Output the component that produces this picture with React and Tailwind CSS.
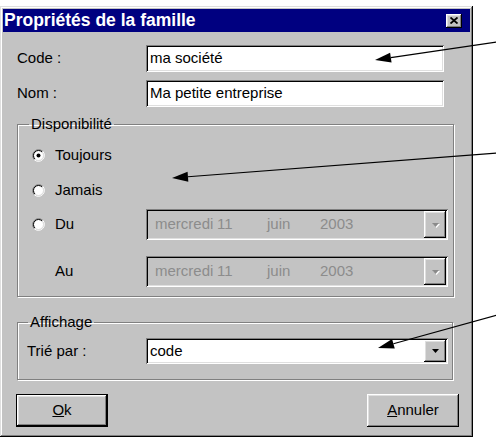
import React from "react";

const raised =
  "shadow-[inset_-1px_-1px_#000,inset_1px_1px_#fff,inset_-2px_-2px_#808080,inset_2px_2px_#dfdfdf]";
const sunken =
  "shadow-[inset_1px_1px_#808080,inset_-1px_-1px_#fff,inset_2px_2px_#000,inset_-2px_-2px_#dfdfdf]";

function Radio({ checked }) {
  return (
    <svg width="13" height="13" viewBox="0 0 13 13" className="shrink-0">
      <circle cx="6.5" cy="6.5" r="5" fill="#fff" />
      <path d="M10.74 2.26 A6 6 0 0 0 2.26 10.74" fill="none" stroke="#808080" />
      <path d="M10.74 2.26 A6 6 0 0 1 2.26 10.74" fill="none" stroke="#fff" />
      <path d="M10.04 2.96 A5 5 0 0 0 2.96 10.04" fill="none" stroke="#000" />
      <path d="M10.04 2.96 A5 5 0 0 1 2.96 10.04" fill="none" stroke="#dfdfdf" />
      {checked && <circle cx="6.5" cy="6.5" r="2" fill="#000" />}
    </svg>
  );
}

function DropButton({ disabled }) {
  return (
    <div className={`w-[22px] h-full bg-[#c3c3c3] flex items-center justify-center ${raised}`}>
      <svg width="9" height="6" viewBox="0 0 9 6">
        {disabled && <polygon points="2,2 9,2 5.5,6" fill="#fff" />}
        <polygon points="1,1 8,1 4.5,5" fill={disabled ? "#8a8a8a" : "#000"} />
      </svg>
    </div>
  );
}

function DatePicker() {
  return (
    <div className={`w-[302px] h-[31px] bg-[#c3c3c3] p-[2px] flex items-stretch ${sunken}`}>
      <div className="flex-1 flex items-center pl-[7px] text-[15px] text-[#8c8c8c]">
        <span className="w-[62px]">mercredi</span>
        <span className="w-[50px]">11</span>
        <span className="w-[53px]">juin</span>
        <span>2003</span>
      </div>
      <DropButton disabled />
    </div>
  );
}

function Arrow({ x1, y1, x2, y2 }) {
  const dx = x2 - x1;
  const dy = y2 - y1;
  const len = Math.hypot(dx, dy);
  const ux = dx / len;
  const uy = dy / len;
  const bx = x2 - 16 * ux;
  const by = y2 - 16 * uy;
  const nx = -uy * 5;
  const ny = ux * 5;
  return (
    <g>
      <line x1={x1} y1={y1} x2={bx} y2={by} stroke="#000" strokeWidth="1.2" />
      <polygon
        points={`${x2},${y2} ${bx + nx},${by + ny} ${bx - nx},${by - ny}`}
        fill="#000"
      />
    </g>
  );
}

export default function App() {
  return (
    <div className="relative w-[496px] h-[443px] bg-white pt-[6px] font-['Liberation_Sans',Arial,sans-serif] text-black">
      <div
        className={`w-[473px] h-[431px] bg-[#c3c3c3] p-[3px] flex flex-col shadow-[inset_-1px_-1px_#000,inset_1px_1px_#dfdfdf,inset_-2px_-2px_#808080,inset_2px_2px_#fff]`}
      >
        {/* title bar */}
        <div className="h-[23px] shrink-0 bg-[#000080] flex items-center justify-between pl-[1px] pr-[8px]">
          <span className="text-white font-bold text-[17.5px] leading-none">
            Propriétés de la famille
          </span>
          <div className={`w-[16px] h-[14px] bg-[#c3c3c3] flex items-center justify-center ${raised}`}>
            <svg width="8" height="7" viewBox="0 0 8 7">
              <path d="M0.5 0.5 L7.5 6.5 M7.5 0.5 L0.5 6.5" stroke="#000" strokeWidth="1.8" />
            </svg>
          </div>
        </div>

        {/* Code / Nom */}
        <div className="mt-[13px] h-[27px] flex items-center text-[15px]">
          <div className="w-[143px] pl-[14px]">Code :</div>
          <div className={`w-[298px] h-full bg-white flex items-center pl-[4px] ${sunken}`}>
            ma société
          </div>
        </div>
        <div className="mt-[8px] h-[27px] flex items-center text-[15px]">
          <div className="w-[143px] pl-[14px]">Nom :</div>
          <div className={`w-[298px] h-full bg-white flex items-center pl-[4px] ${sunken}`}>
            Ma petite entreprise
          </div>
        </div>

        {/* Disponibilité */}
        <fieldset className="mt-[8px] ml-[14px] w-[437px] border border-[#808080] shadow-[inset_1px_1px_#fff,1px_1px_#fff] pb-[9px] text-[15px]">
          <legend className="ml-[11px] px-[2px] leading-[18px]">Disponibilité</legend>
          <div className="mt-[9px] h-[26px] flex items-center">
            <div className="w-[128px] pl-[14px] flex items-center">
              <Radio checked />
              <span className="ml-[10px]">Toujours</span>
            </div>
          </div>
          <div className="mt-[9px] h-[26px] flex items-center">
            <div className="w-[128px] pl-[14px] flex items-center">
              <Radio />
              <span className="ml-[10px]">Jamais</span>
            </div>
          </div>
          <div className="mt-[6px] h-[31px] flex items-center">
            <div className="w-[128px] pl-[14px] flex items-center">
              <Radio />
              <span className="ml-[10px]">Du</span>
            </div>
            <DatePicker />
          </div>
          <div className="mt-[16px] h-[31px] flex items-center">
            <div className="w-[128px] pl-[37px]">Au</div>
            <DatePicker />
          </div>
        </fieldset>

        {/* Affichage */}
        <fieldset className="mt-[16px] ml-[14px] w-[436px] border border-[#808080] shadow-[inset_1px_1px_#fff,1px_1px_#fff] pb-[15px] text-[15px]">
          <legend className="ml-[10px] px-[2px] leading-[18px]">Affichage</legend>
          <div className="mt-[7px] h-[26px] flex items-center">
            <div className="w-[128px] pl-[9px]">Trié par :</div>
            <div className={`w-[302px] h-full bg-white p-[2px] flex items-stretch ${sunken}`}>
              <div className="flex-1 flex items-center pl-[2px]">code</div>
              <DropButton />
            </div>
          </div>
        </fieldset>

        {/* buttons */}
        <div className="mt-[14px] flex justify-between pl-[13px] pr-[11px] text-[15px]">
          <div className="w-[92px] h-[33px] border border-black">
            <div className={`w-full h-full bg-[#c3c3c3] flex items-center justify-center ${raised}`}>
              <span>
                <span className="underline">O</span>k
              </span>
            </div>
          </div>
          <div className={`w-[92px] h-[33px] bg-[#c3c3c3] flex items-center justify-center ${raised}`}>
            <span>
              <span className="underline">A</span>nnuler
            </span>
          </div>
        </div>
      </div>

      {/* annotation arrows */}
      <svg className="absolute inset-0 pointer-events-none" width="496" height="443">
        <Arrow x1={497} y1={42} x2={375} y2={60} />
        <Arrow x1={497} y1={153} x2={172} y2={178} />
        <Arrow x1={497} y1={315} x2={378} y2={348} />
      </svg>
    </div>
  );
}
